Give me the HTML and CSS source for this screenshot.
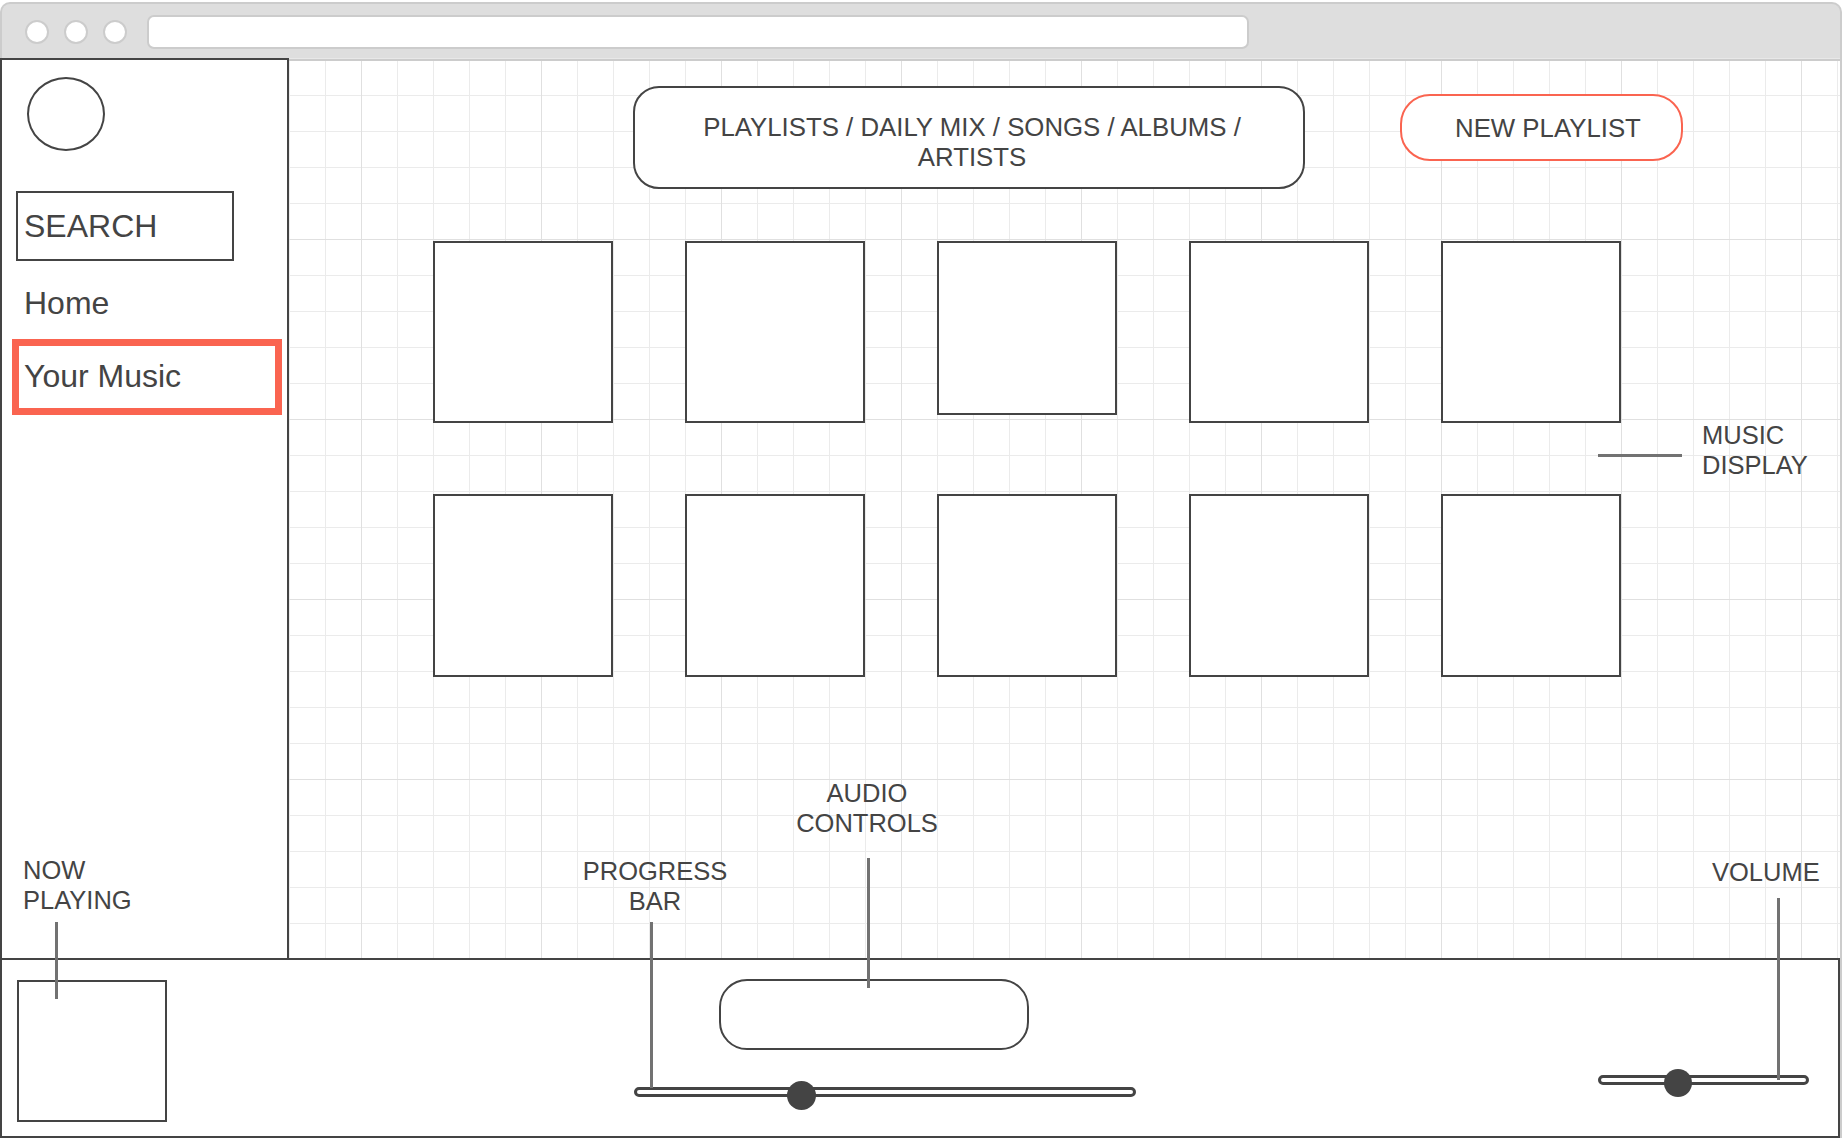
FILE: index.html
```html
<!DOCTYPE html>
<html>
<head>
	<title>Music app wireframe</title>

	<link rel="stylesheet" href="styles.css">
</head>
<body>
	<div class="window">
		<div class="chrome">
			<span class="dot"></span>
			<span class="dot"></span>
			<span class="dot"></span>
			<div class="address"></div>
		</div>
		<div class="app">
			<div class="main-row">
				<div class="sidebar">
					<div class="logo"></div>
					<div class="search">SEARCH</div>
					<a href="#" class="nav-item">Home</a>
					<a href="#" class="nav-item active">Your Music</a>
				</div>
				<div class="canvas">
					<div class="header">
						<div class="categories">PLAYLISTS / DAILY MIX / SONGS / ALBUMS / ARTISTS</div>
						<a href="#" class="new-playlist">NEW PLAYLIST</a>
					</div>
					<div class="albums">
						<div class="album"></div>
						<div class="album"></div>
						<div class="album short"></div>
						<div class="album"></div>
						<div class="album"></div>
						<div class="album tall"></div>
						<div class="album tall"></div>
						<div class="album tall"></div>
						<div class="album tall"></div>
						<div class="album tall"></div>
					</div>
				</div>
			</div>
			<div class="player">
				<div class="now-box"></div>
				<div class="controls">
					<div class="audio-pill"></div>
					<div class="progress">
						<span class="knob progress-knob"></span>
					</div>
				</div>
				<div class="volume">
					<span class="knob volume-knob"></span>
				</div>
			</div>
		</div>

		<!-- annotations -->
		<div class="note note-music">MUSIC<br>DISPLAY</div>
		<div class="leader leader-music"></div>
		<div class="note note-audio">AUDIO<br>CONTROLS</div>
		<div class="leader leader-audio"></div>
		<div class="note note-progress">PROGRESS<br>BAR</div>
		<div class="leader leader-progress"></div>
		<div class="note note-now">NOW<br>PLAYING</div>
		<div class="leader leader-now"></div>
		<div class="note note-volume">VOLUME</div>
		<div class="leader leader-volume"></div>
	</div>
</body>
</html>
```

FILE: styles.css
```css
*{
	box-sizing: border-box;
}
body{
	margin: 0;
	background: white;
	font-family: "Liberation Sans", Arial, sans-serif;
	color: #444;
}
a{
	color: #444;
	text-decoration: none;
}
.window{
	position: relative;
	width: 1842px;
	height: 1138px;
	overflow: hidden;
}

/* browser chrome */
.chrome{
	margin-top: 2px;
	height: 56px;
	background: #dedede;
	border: 2px solid #ccc;
	border-bottom: none;
	border-radius: 10px 10px 0 0;
	display: flex;
	align-items: center;
	padding: 2px 0 0 23px;
	gap: 15px;
}
.dot{
	width: 24px;
	height: 24px;
	border-radius: 50%;
	background: white;
	border: 2px solid #ccc;
}
.address{
	margin-left: 5px;
	width: 1102px;
	height: 34px;
	background: white;
	border: 2px solid #ccc;
	border-radius: 7px;
}

.app{
	width: 1842px;
	border-right: 2px solid #ccc;
}
.main-row{
	display: flex;
	height: 900px;
}

/* sidebar */
.sidebar{
	width: 289px;
	background: white;
	border: 2px solid #444;
	border-bottom: none;
	display: flex;
	flex-direction: column;
	align-items: flex-start;
}
.logo{
	width: 78px;
	height: 74px;
	margin: 17px 0 0 25px;
	border: 2px solid #444;
	border-radius: 50%;
}
.search{
	width: 218px;
	height: 70px;
	margin: 40px 0 0 14px;
	border: 2px solid #444;
	padding-left: 6px;
	font-size: 32px;
	line-height: 66px;
}
.nav-item{
	font-size: 32px;
	line-height: 40px;
	margin-top: 22px;
	padding-left: 22px;
}
.nav-item.active{
	margin: 16px 0 0 10px;
	width: 270px;
	height: 76px;
	border: 7px solid #fa6450;
	padding-left: 5px;
	line-height: 60px;
}

/* grid canvas */
.canvas{
	flex: 1;
	border-top: 1px solid #e8e8e8;
	box-shadow: inset 0 2px #ccc;
	background-color: white;
	background-image:
		linear-gradient(to right, #e0e0e0 1px, transparent 1px),
		linear-gradient(to bottom, #e0e0e0 1px, transparent 1px),
		linear-gradient(to right, #ebebeb 1px, transparent 1px),
		linear-gradient(to bottom, #ebebeb 1px, transparent 1px);
	background-size: 180px 180px, 180px 180px, 36px 36px, 36px 36px;
	background-position: 72px 0;
}
.header{
	display: flex;
	align-items: flex-start;
	margin: 27px 0 0 344px;
}
.categories{
	width: 672px;
	border: 2px solid #444;
	border-radius: 26px;
	background: white;
	padding: 24px 54px 15px 60px;
	text-align: center;
	font-size: 25.8px;
	line-height: 30px;
}
.new-playlist{
	margin: 8px 0 0 95px;
	width: 283px;
	border: 2px solid #fa6450;
	border-radius: 30px;
	background: white;
	padding: 17px 0 16px 53px;
	font-size: 25.8px;
	line-height: 30px;
}
.albums{
	display: grid;
	grid-template-columns: repeat(5, 180px);
	column-gap: 72px;
	row-gap: 71px;
	align-items: start;
	margin: 52px 0 0 144px;
}
.album{
	height: 182px;
	background: white;
	border: 2px solid #444;
}
.album.short{
	height: 174px;
}
.album.tall{
	height: 183px;
}

/* player bar */
.player{
	display: flex;
	align-items: flex-start;
	width: 1840px;
	height: 180px;
	border: 2px solid #444;
	background: white;
}
.now-box{
	width: 150px;
	height: 142px;
	margin: 20px 0 0 15px;
	border: 2px solid #444;
}
.controls{
	width: 502px;
	margin-left: 467px;
}
.audio-pill{
	width: 310px;
	height: 71px;
	margin: 19px 0 0 85px;
	border: 2px solid #444;
	border-radius: 28px;
}
.progress{
	position: relative;
	margin-top: 37px;
	height: 10px;
	border: 3px solid #444;
	border-radius: 6px;
}
.volume{
	position: relative;
	width: 211px;
	height: 10px;
	margin: 115px 0 0 462px;
	border: 3px solid #444;
	border-radius: 6px;
}
.knob{
	position: absolute;
	border-radius: 50%;
	background: #444;
}
.progress-knob{
	width: 29px;
	height: 29px;
	left: 150px;
	top: -9px;
}
.volume-knob{
	width: 28px;
	height: 28px;
	left: 63px;
	top: -9px;
}

/* annotations */
.note{
	position: absolute;
	font-size: 25.5px;
	line-height: 30px;
	color: #444;
}
.note-music{
	left: 1702px;
	top: 420px;
}
.note-audio{
	left: 767px;
	top: 778px;
	width: 200px;
	text-align: center;
}
.note-progress{
	left: 555px;
	top: 856px;
	width: 200px;
	text-align: center;
}
.note-now{
	left: 23px;
	top: 855px;
}
.note-volume{
	left: 1712px;
	top: 857px;
}
.leader{
	position: absolute;
	background: #727272;
}
.leader-music{
	left: 1598px;
	top: 454px;
	width: 84px;
	height: 3px;
}
.leader-audio{
	left: 867px;
	top: 858px;
	width: 3px;
	height: 130px;
}
.leader-progress{
	left: 650px;
	top: 922px;
	width: 3px;
	height: 166px;
}
.leader-now{
	left: 55px;
	top: 922px;
	width: 3px;
	height: 77px;
}
.leader-volume{
	left: 1777px;
	top: 898px;
	width: 3px;
	height: 182px;
}
```
